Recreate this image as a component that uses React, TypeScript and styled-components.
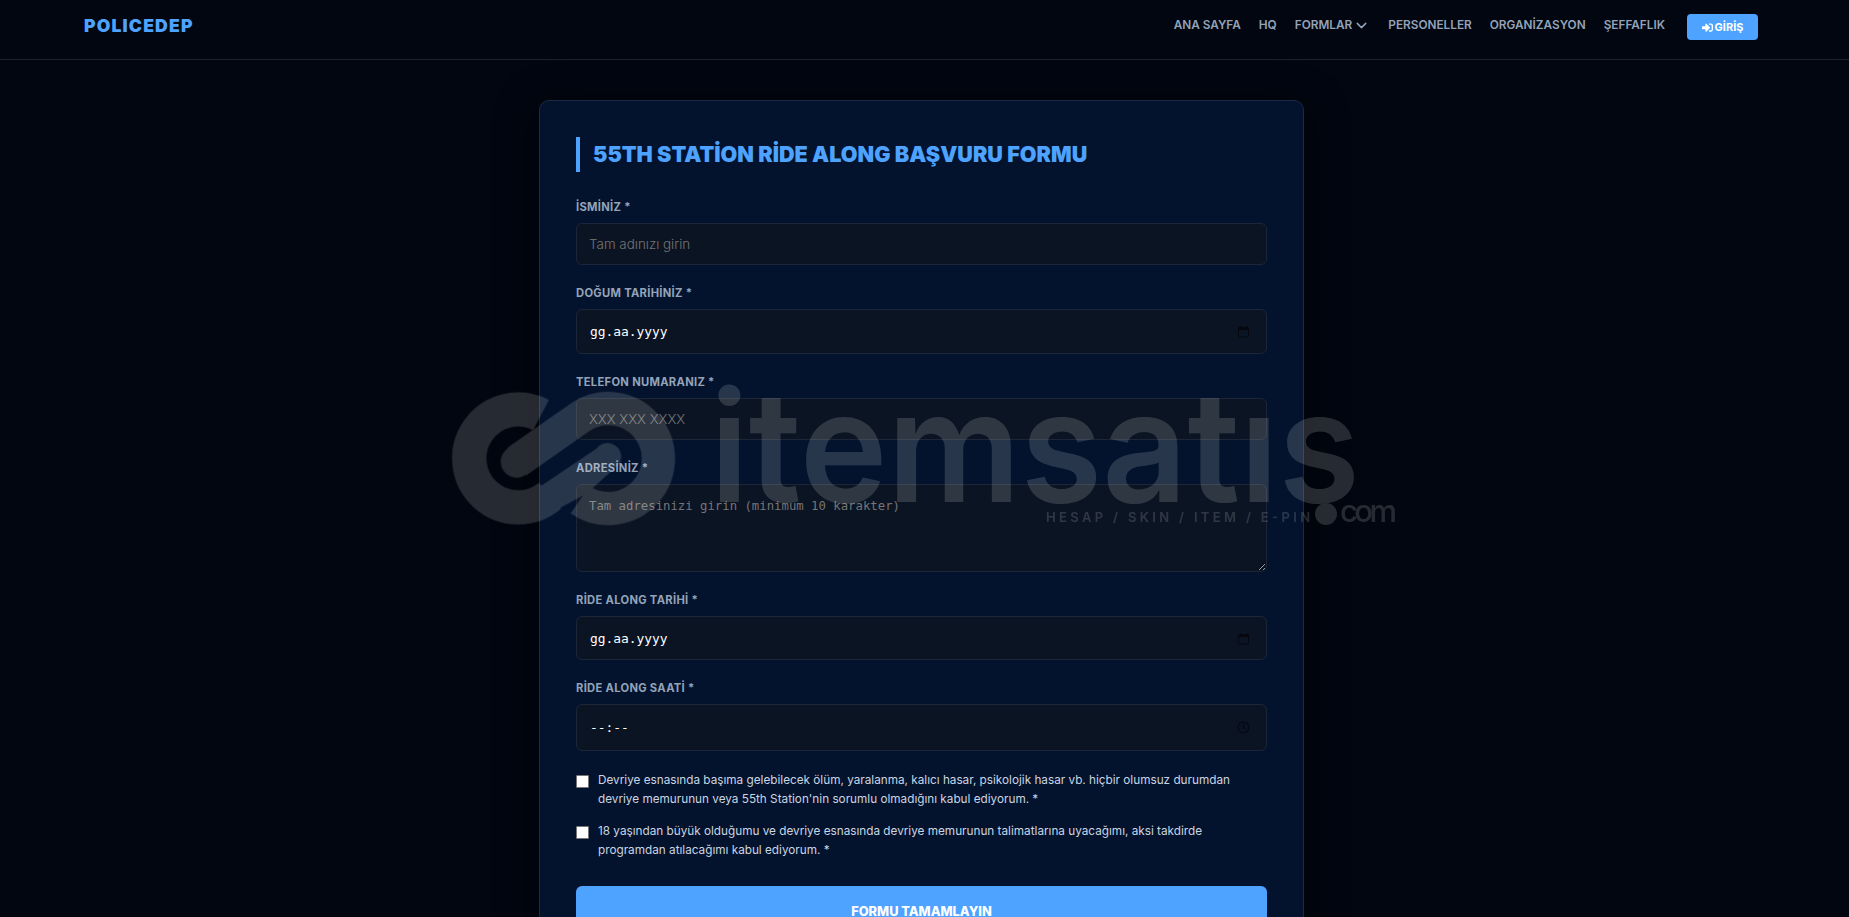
import React from "react";
import styled, { createGlobalStyle } from "styled-components";
import { ChevronDown, Clock } from "lucide-react";
import { FaSignInAlt } from "react-icons/fa";

const GlobalStyle = createGlobalStyle`
  html, body {
    margin: 0;
    padding: 0;
    background: #010610;
    font-family: Inter, "Liberation Sans", sans-serif;
    scrollbar-width: none;
    overflow-x: hidden;
  }
  * { box-sizing: border-box; }
`;

const NavBar = styled.nav`
  height: 60px;
  display: flex;
  align-items: center;
  justify-content: space-between;
  padding: 0 91px 0 84px;
  border-bottom: 1px solid #1e2128;
`;

const Brand = styled.div`
  color: #4da3ff;
  font-size: 17.6px;
  font-weight: 900;
  letter-spacing: 1.15px;
  margin-top: -8px;
`;

const NavLinks = styled.div`
  display: flex;
  align-items: center;
  gap: 18px;
  margin-top: -9px;
`;

const NavLink = styled.a`
  display: flex;
  align-items: center;
  gap: 1px;
  color: #94a3b8;
  font-size: 11.8px;
  font-weight: 600;
`;

const LoginButton = styled.button`
  width: 71px;
  height: 26px;
  margin: 4px 0 0 4px;
  display: flex;
  align-items: center;
  justify-content: center;
  gap: 2px;
  border: 0;
  border-radius: 4px;
  background: #4da3ff;
  color: #fff;
  font-family: inherit;
  font-size: 11px;
  font-weight: 700;
`;

const Page = styled.main`
  display: flex;
  justify-content: center;
  padding: 40px 6px 40px 0;
`;

const Card = styled.section`
  width: 765px;
  padding: 36px;
  background: #03132d;
  border: 1px solid #1b2942;
  border-radius: 10px;
  box-shadow: 0 10px 40px rgba(0, 0, 0, 0.6);
`;

const Title = styled.h1`
  margin: 0 0 27px;
  height: 35px;
  line-height: 35px;
  padding-left: 13px;
  border-left: 4px solid #4da3ff;
  color: #4da3ff;
  font-size: 21.6px;
  font-weight: 900;
`;

const Group = styled.div<{ $gap?: number }>`
  margin-bottom: ${(p) => p.$gap ?? 20}px;
`;

const Label = styled.label`
  display: block;
  height: 16px;
  line-height: 17px;
  margin-bottom: 8px;
  color: #94a3b8;
  font-size: 11.2px;
  font-weight: 700;
  letter-spacing: 0.3px;
`;

const fieldBase = `
  width: 100%;
  background: #0b1423;
  border: 1px solid #1c2638;
  border-radius: 6px;
  outline: none;
  color: #e2e8f0;
`;

const TextInput = styled.input<{ $h: number }>`
  ${fieldBase}
  display: block;
  height: ${(p) => p.$h}px;
  padding: 0 12px;
  font-family: Inter, sans-serif;
  font-size: 13.4px;
  font-weight: 300;
  &::placeholder { color: #757575; opacity: 1; }
`;

const AddressArea = styled.textarea`
  ${fieldBase}
  display: block;
  height: 88px;
  padding: 14px 12px;
  resize: vertical;
  font-family: "DejaVu Sans Mono", monospace;
  font-size: 12.3px;
  line-height: 15px;
  &::placeholder { color: #757575; opacity: 1; }
`;

const PickerField = styled.div<{ $h: number }>`
  ${fieldBase}
  height: ${(p) => p.$h}px;
  display: flex;
  align-items: center;
  justify-content: space-between;
  padding: 0 16px 0 13px;
  color: #fff;
  font-family: "DejaVu Sans Mono", monospace;
  font-size: 12.9px;
  svg { color: #05080f; flex: none; }
`;

const CheckRow = styled.label<{ $gap: number }>`
  display: flex;
  align-items: flex-start;
  gap: 9px;
  margin-bottom: ${(p) => p.$gap}px;
  color: #cbd5e1;
  font-size: 11.75px;
  line-height: 19px;
  span { padding-top: 1px; }
  input {
    appearance: none;
    flex: none;
    width: 13px;
    height: 13px;
    margin: 5px 0 0;
    background: #fff;
    border: 1px solid #767676;
    border-radius: 1px;
  }
`;

const SubmitButton = styled.button`
  display: block;
  width: 100%;
  height: 50px;
  border: 0;
  border-radius: 6px;
  background: #4da3ff;
  color: #fff;
  font-family: inherit;
  font-size: 12.8px;
  font-weight: 800;
`;

const Watermark = styled.svg`
  position: fixed;
  left: 0;
  top: 0;
  width: 1849px;
  height: 917px;
  pointer-events: none;
  font-family: Inter, sans-serif;
`;

const CalendarIcon = () => (
  <svg width="13" height="13" viewBox="0 0 13 13" fill="none">
    <rect x="1.5" y="2.5" width="10" height="9.5" rx="1" stroke="currentColor" />
    <rect x="1.5" y="2" width="10" height="3" fill="currentColor" />
    <path d="M3.5 1v2M9.5 1v2" stroke="currentColor" />
  </svg>
);

const App = () => {
  return (
    <>
      <GlobalStyle />
      <NavBar>
        <Brand>POLICEDEP</Brand>
        <NavLinks>
          <NavLink>ANA SAYFA</NavLink>
          <NavLink>HQ</NavLink>
          <NavLink>
            FORMLAR <ChevronDown size={17} />
          </NavLink>
          <NavLink>PERSONELLER</NavLink>
          <NavLink>ORGANİZASYON</NavLink>
          <NavLink>ŞEFFAFLIK</NavLink>
          <LoginButton>
            <FaSignInAlt size={11} /> GİRİŞ
          </LoginButton>
        </NavLinks>
      </NavBar>
      <Page>
        <Card>
          <Title>55TH STATİON RİDE ALONG BAŞVURU FORMU</Title>
          <Group>
            <Label>İSMİNİZ *</Label>
            <TextInput $h={42} placeholder="Tam adınızı girin" />
          </Group>
          <Group>
            <Label>DOĞUM TARİHİNİZ *</Label>
            <PickerField $h={45}>
              gg.aa.yyyy
              <CalendarIcon />
            </PickerField>
          </Group>
          <Group>
            <Label>TELEFON NUMARANIZ *</Label>
            <TextInput $h={42} placeholder="XXX XXX XXXX" />
          </Group>
          <Group>
            <Label>ADRESİNİZ *</Label>
            <AddressArea placeholder="Tam adresinizi girin (minimum 10 karakter)" />
          </Group>
          <Group>
            <Label>RİDE ALONG TARİHİ *</Label>
            <PickerField $h={44}>
              gg.aa.yyyy
              <CalendarIcon />
            </PickerField>
          </Group>
          <Group $gap={19}>
            <Label>RİDE ALONG SAATİ *</Label>
            <PickerField $h={47}>
              --:--
              <Clock size={13} />
            </PickerField>
          </Group>
          <CheckRow $gap={12}>
            <input type="checkbox" />
            <span>
              Devriye esnasında başıma gelebilecek ölüm, yaralanma, kalıcı hasar, psikolojik hasar vb. hiçbir olumsuz durumdan devriye memurunun veya 55th Station'nin sorumlu olmadığını kabul ediyorum. *
            </span>
          </CheckRow>
          <CheckRow $gap={26}>
            <input type="checkbox" />
            <span>
              18 yaşından büyük olduğumu ve devriye esnasında devriye memurunun talimatlarına uyacağımı, aksi takdirde programdan atılacağımı kabul ediyorum. *
            </span>
          </CheckRow>
          <SubmitButton>FORMU TAMAMLAYIN</SubmitButton>
        </Card>
      </Page>
      <Watermark viewBox="0 0 1849 917">
        <g opacity="0.15" fill="#fff">
          <g transform="translate(440 380) scale(0.3333)">
            <path d="M303 105 A147 147 0 1 0 330 347" fill="none" stroke="#fff" strokeWidth="103" />
            <path d="M285 330 L470 205 A37 37 0 1 1 535 255 L440 340 L330 400 Z" />
            <path d="M230 245 L420 112 A150 150 0 1 1 420 359" fill="none" stroke="#fff" strokeWidth="100" />
            <circle cx="230" cy="245" r="48" />
          </g>
          <text x="710" y="502" fontSize="154" fontWeight="600" textLength="650" lengthAdjust="spacingAndGlyphs">
            itemsatıs
          </text>
          <circle cx="1326" cy="514" r="11" />
          <text x="1046" y="522" fontSize="13" fontWeight="600" textLength="264" lengthAdjust="spacing">
            HESAP / SKIN / ITEM / E-PIN
          </text>
          <text x="1340" y="522" fontSize="31" fontWeight="500" textLength="57" lengthAdjust="spacing">
            com
          </text>
        </g>
      </Watermark>
    </>
  );
};

export default App;
